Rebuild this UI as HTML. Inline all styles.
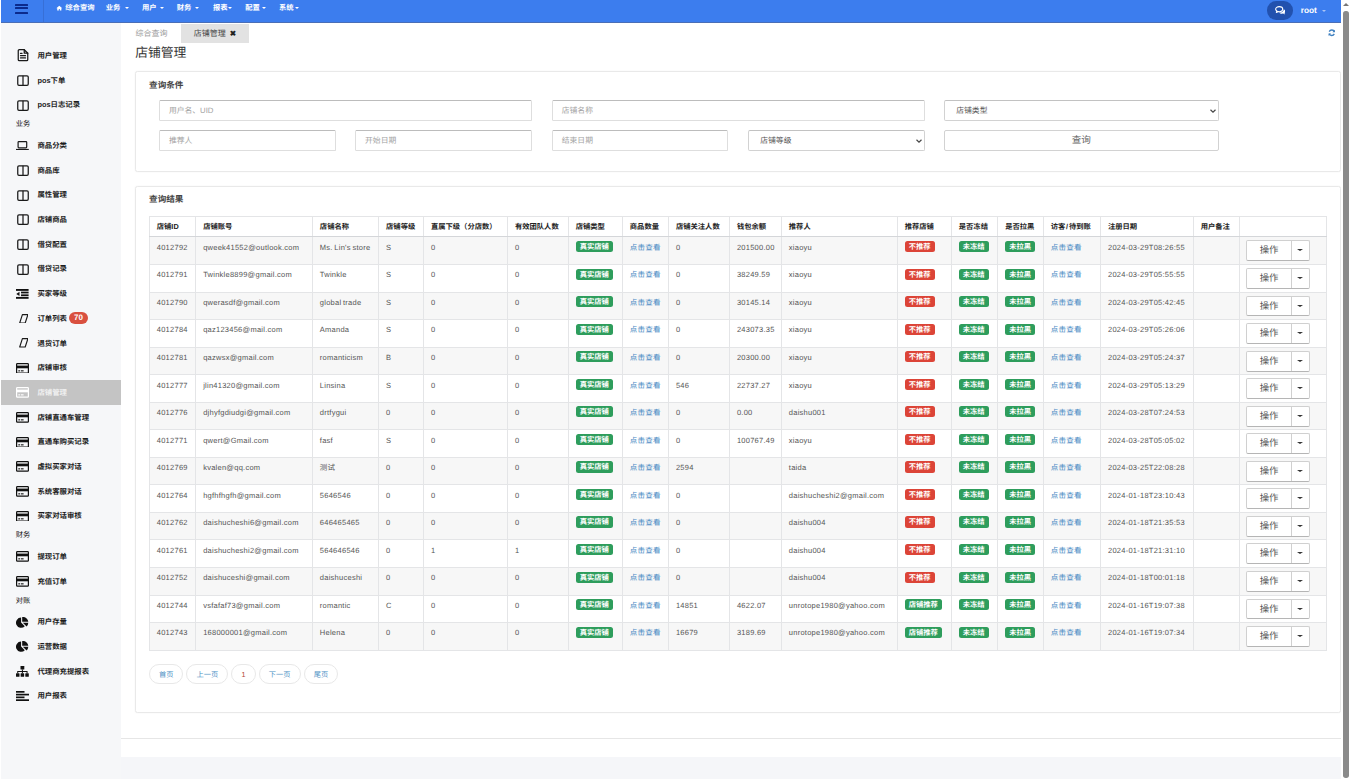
<!DOCTYPE html>
<html lang="zh-CN"><head><meta charset="utf-8"><title>店铺管理</title>
<style>
*{box-sizing:border-box;margin:0;padding:0}
html,body{width:1366px;height:779px;overflow:hidden;background:#fff}
body{text-rendering:geometricPrecision;font-family:"Liberation Sans","Noto Sans CJK SC",sans-serif;font-size:7.4px;color:#495057;position:relative}
#app{position:absolute;left:1px;top:0;width:1340px;height:779px;background:#f5f6f9;overflow:hidden}
.nav{position:absolute;left:0;top:0;width:1340px;height:22.5px;background:#3c7dee;color:#fff}
.burger{position:absolute;left:14.2px;top:3.7px;width:12.8px}
.burger i{display:block;height:1.9px;background:#0b2a8c;margin-bottom:1.8px;border-radius:.5px}
.burger i:nth-child(2){margin-bottom:2.4px}
.vsep{position:absolute;left:41.5px;top:0;width:1px;height:22.5px;background:#376fd6}
.home{position:absolute;left:55px;top:5px;width:6.6px;height:6.2px}
.mi{position:absolute;top:2.3px;line-height:11px;font-weight:bold;font-size:7.3px;white-space:nowrap;margin-left:-1px}
.car{position:absolute;top:7.1px;width:0;height:0;border-left:2.5px solid transparent;border-right:2.5px solid transparent;border-top:2.5px solid #fff;margin-left:-1.2px}
.car.light{border-top-color:#a9c4f5;border-left-width:2.8px;border-right-width:2.8px;border-top-width:2.4px}
.cdk{display:inline-block;width:0;height:0;border-left:3px solid transparent;border-right:3px solid transparent;border-top:2.7px solid #333;vertical-align:middle;margin-top:-1px}
.chat{position:absolute;left:1266.4px;top:1px;width:25.4px;height:18.5px;border-radius:9.2px;background:#2251ae;display:flex;align-items:center;justify-content:center}
.user{position:absolute;left:1299.7px;top:5.1px;line-height:11px;font-weight:bold;font-size:8.3px}
.side{position:absolute;left:0;top:22.5px;width:120px;bottom:0;background:#f6f7f9;padding-top:20.9px}
.si{position:relative;height:24.7px;color:#1c1c1c;font-weight:bold;font-size:7.4px;white-space:nowrap;line-height:24.7px}
.si .ic{position:absolute;display:block}
.si .st{position:absolute;left:36.4px;top:.6px}
.si.act{background:#c4c4c4;color:#f0f0f0}
.si.act .ic{filter:invert(1) brightness(3)}
.sh{height:16px;padding-left:14.8px;line-height:14.6px;font-size:7.3px;color:#111}
.bdg{position:absolute;left:68.3px;top:5.3px;height:12.3px;width:18.5px;text-align:center;line-height:12.3px;background:#d9503f;color:#fff;border-radius:6.2px;font-size:8px;font-weight:bold}
.main{position:absolute;left:120px;top:22.5px;width:1220px;height:716px;background:#fff}
.tabs{position:absolute;left:.5px;top:0;height:21px;width:1219.5px}
.tab{position:absolute;top:1.3px;height:19px;line-height:19px;font-size:8px;color:#9a9a9a}
.tab.t1{left:14px}
.tab.t2{left:59.7px;width:68px;background:#e2e2e2;color:#444;padding-left:12.5px}
.tab .x{font-size:7.6px;color:#222;margin-left:1.8px;font-weight:bold}
.refresh{position:absolute;left:1206.5px;top:6.5px;width:7.5px;height:7.5px}
.title{position:absolute;left:14.2px;top:21.7px;font-size:12.8px;font-weight:normal;color:#333;line-height:18px}
.card{position:absolute;left:13.9px;width:1205.9px;background:#fff;border:1px solid #e9e9e9;border-radius:2.5px;box-shadow:0 0 2px rgba(0,0,0,.06)}
.c1{top:48.3px;height:101px}
.c2{top:163px;height:527.4px}
.ct{position:absolute;left:13.2px;top:6.8px;font-size:8.6px;font-weight:bold;color:#444;line-height:12px}
.fr{position:absolute;left:0;width:100%;height:20px}
.r1{top:28px}.r2{top:58.1px}
.inp{position:absolute;top:0;height:20.8px;border:1px solid #dedede;border-top-color:#bcbcbc;border-radius:1.5px;background:#fff;color:#a2a2a2;font-size:7.8px;line-height:20.4px;padding-left:9px}
.inp.sel{color:#555;border-radius:2px;border-color:#d2d2d2;border-top-color:#c2c2c2;padding-left:11.5px}
.inp.sel .chev{position:absolute;right:1px;top:5.8px}
.inp.btn{text-align:center;padding-left:0;color:#666;font-size:9.6px;border-color:#d2d2d2;border-radius:2px}
.tb{position:absolute;left:12.9px;top:29.2px;border-collapse:collapse;table-layout:fixed;width:1177.5px;font-size:7.5px;letter-spacing:.25px;word-spacing:-.7px}
.tb th,.tb td{border:1px solid #e4e5e7;text-align:left;vertical-align:top;padding:0 0 0 7px;white-space:nowrap;overflow:hidden}
.tb th{height:20.2px;line-height:19px;font-weight:bold;color:#222;font-size:7.3px;letter-spacing:0}
.tb td{height:27.55px;padding-top:5.4px;line-height:10px;color:#555}
.tb tbody tr:nth-child(odd){background:#f7f7f7}
.tb tbody tr:first-child td{height:28.1px;padding-top:5.9px}
.tb tbody tr:first-child td.op{padding-top:3.5px}
.tb thead th{border-bottom-color:#d4d6d9}
.tb a{color:#4a8ac4}
.b{display:inline-block;color:#fff;font-weight:bold;font-size:7.3px;line-height:11.2px;height:11.2px;padding:0 4px;border-radius:2.5px;letter-spacing:0;vertical-align:top;margin-top:-1.8px}
.b.g{background:#2e9d5c}
.b.r{background:#dc4437}
.tb td.op{padding:3px 0 0 6.1px}
.ob{display:inline-flex;height:20.9px;border:1px solid #d0d0d0;border-bottom-color:#b5b5b5;border-radius:2px;background:#fff;color:#555;font-size:9.4px;line-height:18.8px;letter-spacing:0}
.o1{width:45.5px;text-align:center;border-right:1px solid #d0d0d0}
.o2{width:16.3px;text-align:center}
.pg{position:absolute;left:12.9px;top:477.5px;height:20.4px;white-space:nowrap;font-size:7.25px}
.pb{display:inline-block;height:20.4px;line-height:20.2px;border:1px solid #e8e8e8;border-radius:10.2px;padding:0 9.1px;margin-right:3px;color:#4a8fc4;background:#fff}
.pb.n{color:#b5483a}
.foot{position:absolute;left:120px;top:738px;width:1220px;height:18.6px;background:#fff;border-top:1px solid #e6e6e6}
.sbar{position:absolute;left:1341px;top:0;width:9px;height:779px;background:#fff}
.sbar .up{position:absolute;left:2.4px;top:2.8px;width:0;height:0;border-left:3px solid transparent;border-right:3px solid transparent;border-bottom:3px solid #777}
.sbar .thumb{position:absolute;left:2.4px;top:11.4px;width:5.5px;height:766.5px;border-radius:2.7px;background:#8a8a8a}
.sl{font-style:normal;padding:0 .8px}
.nav:after{content:"";position:absolute;left:0;right:0;bottom:0;height:.8px;background:#4a6eb6}

</style></head><body>
<div id="app">
<div class="nav">
 <div class="burger"><i></i><i></i><i></i></div>
 <div class="vsep"></div>
 <svg class="home" viewBox="0 0 24 24" fill="#fff"><path d="M12 2.500 0.500 12.500h3.500v9h6v-6h4v6h6v-9h3.500z"/></svg>
 <span class="mi" style="left:65.3px">综合查询</span>
 <span class="mi" style="left:105.8px">业务</span><b class="car" style="left:125px"></b>
 <span class="mi" style="left:141.9px">用户</span><b class="car" style="left:160.600px"></b>
 <span class="mi" style="left:176.8px">财务</span><b class="car" style="left:195.500px"></b>
 <span class="mi" style="left:212.9px">报表</span><b class="car" style="left:228.500px"></b>
 <span class="mi" style="left:245.3px">配置</span><b class="car" style="left:261.700px"></b>
 <span class="mi" style="left:278.9px">系统</span><b class="car" style="left:295px"></b>
 <div class="chat"><svg viewBox="0 0 24 20" width="10.600" height="8.800"><path d="M9.500 1.500c4.400 0 8 2.600 8 5.800s-3.600 5.800-8 5.800c-.9 0-1.700-.1-2.500-.3L3 14.500l1.300-3C2.600 10.400 1.500 9 1.500 7.300c0-3.200 3.600-5.800 8-5.800z" fill="none" stroke="#fff" stroke-width="2.600" stroke-linejoin="round"/><path d="M19.800 7.500c2.200 1 3.700 2.700 3.700 4.600 0 1.500-.8 2.800-2.100 3.700l1.300 3.400-4.200-1.900c-.8.200-1.600.3-2.500.3-2.900 0-5.400-1.100-6.800-2.800 5.600.4 10.800-2.600 10.600-7.300z" fill="#fff"/></svg></div>
 <div class="user">root</div><b class="car light" style="left:1322.3px;top:10px"></b>
</div>
<div class="side">
<div class="si"><svg class="ic" style="width:12px;height:12.4px;left:15.6px;top:6.1px" viewBox="0 0 24 25" preserveAspectRatio="none"><g fill="none" stroke="#1a1a1a" stroke-width="2.5" stroke-linejoin="round" stroke-linecap="round"><path d="M14.500 1.500H4.500a2 2 0 0 0-2 2v18a2 2 0 0 0 2 2h15a2 2 0 0 0 2-2V8.500z"/><path d="M14.500 1.500v7h7"/><path d="M7 13.500h10M7 18h10M7 9h3"/></g></svg><span class="st">用户管理</span></div>
<div class="si"><svg class="ic" style="width:12px;height:11px;left:15.6px;top:6.8px" viewBox="0 0 24 22" preserveAspectRatio="none"><g fill="none" stroke="#1a1a1a" stroke-width="2.5" stroke-linejoin="round"><rect x="1.500" y="1.500" width="21" height="19" rx="2.500"/><path d="M12 1.500v19"/></g></svg><span class="st">pos下单</span></div>
<div class="si"><svg class="ic" style="width:12px;height:11px;left:15.6px;top:6.8px" viewBox="0 0 24 22" preserveAspectRatio="none"><g fill="none" stroke="#1a1a1a" stroke-width="2.5" stroke-linejoin="round"><rect x="1.500" y="1.500" width="21" height="19" rx="2.500"/><path d="M12 1.500v19"/></g></svg><span class="st">pos日志记录</span></div>
<div class="sh">业务</div>
<div class="si"><svg class="ic" style="width:12.8px;height:9.2px;left:15.2px;top:7.7px" viewBox="0 0 25.600 18.400" preserveAspectRatio="none"><g fill="none" stroke="#1a1a1a" stroke-width="2.400" stroke-linejoin="round"><rect x="4.200" y="1.200" width="17.200" height="12.400" rx="1.500"/><path d="M0 17h25.600"/></g></svg><span class="st">商品分类</span></div>
<div class="si"><svg class="ic" style="width:12px;height:11px;left:15.6px;top:6.8px" viewBox="0 0 24 22" preserveAspectRatio="none"><g fill="none" stroke="#1a1a1a" stroke-width="2.5" stroke-linejoin="round"><rect x="1.500" y="1.500" width="21" height="19" rx="2.500"/><path d="M12 1.500v19"/></g></svg><span class="st">商品库</span></div>
<div class="si"><svg class="ic" style="width:12px;height:11px;left:15.6px;top:6.8px" viewBox="0 0 24 22" preserveAspectRatio="none"><g fill="none" stroke="#1a1a1a" stroke-width="2.5" stroke-linejoin="round"><rect x="1.500" y="1.500" width="21" height="19" rx="2.500"/><path d="M12 1.500v19"/></g></svg><span class="st">属性管理</span></div>
<div class="si"><svg class="ic" style="width:12px;height:11px;left:15.6px;top:6.8px" viewBox="0 0 24 22" preserveAspectRatio="none"><g fill="none" stroke="#1a1a1a" stroke-width="2.5" stroke-linejoin="round"><rect x="1.500" y="1.500" width="21" height="19" rx="2.500"/><path d="M12 1.500v19"/></g></svg><span class="st">店铺商品</span></div>
<div class="si"><svg class="ic" style="width:12px;height:11px;left:15.6px;top:6.8px" viewBox="0 0 24 22" preserveAspectRatio="none"><g fill="none" stroke="#1a1a1a" stroke-width="2.5" stroke-linejoin="round"><rect x="1.500" y="1.500" width="21" height="19" rx="2.500"/><path d="M12 1.500v19"/></g></svg><span class="st">借贷配置</span></div>
<div class="si"><svg class="ic" style="width:12px;height:11px;left:15.6px;top:6.8px" viewBox="0 0 24 22" preserveAspectRatio="none"><g fill="none" stroke="#1a1a1a" stroke-width="2.5" stroke-linejoin="round"><rect x="1.500" y="1.500" width="21" height="19" rx="2.500"/><path d="M12 1.500v19"/></g></svg><span class="st">借贷记录</span></div>
<div class="si"><svg class="ic" style="width:12.6px;height:9.8px;left:15.3px;top:7.4px" viewBox="0 0 25 20" preserveAspectRatio="none"><g fill="#111"><rect x="0" y="0" width="25" height="3.800"/><rect x="10" y="5.400" width="15" height="3.600"/><rect x="10" y="11" width="15" height="3.600"/><rect x="0" y="16.200" width="25" height="3.800"/><path d="M7 5.500v9l-6.500-4.500z"/></g></svg><span class="st">买家等级</span></div>
<div class="si"><svg class="ic" style="width:9.600px;height:9.600px;left:17.900px;top:7.300px" viewBox="0 0 19.200 19.200"><path d="M6.800 1.200h11l-5.400 16.800H1.400z" fill="none" stroke="#1a1a1a" stroke-width="2.300" stroke-linejoin="round"/></svg><span class="st">订单列表</span><span class="bdg">70</span></div>
<div class="si"><svg class="ic" style="width:9.600px;height:9.600px;left:17.900px;top:7.300px" viewBox="0 0 19.200 19.200"><path d="M6.800 1.200h11l-5.400 16.800H1.400z" fill="none" stroke="#1a1a1a" stroke-width="2.300" stroke-linejoin="round"/></svg><span class="st">退货订单</span></div>
<div class="si"><svg class="ic" style="width:13px;height:10.8px;left:15.1px;top:6.9px" viewBox="0 0 26 21.600" preserveAspectRatio="none"><g><rect x="1.200" y="1.200" width="23.600" height="19.200" rx="1.600" fill="none" stroke="#111" stroke-width="2.400"/><rect x="1.300" y="5.200" width="23.400" height="5.400" fill="#111"/><rect x="4.600" y="14.600" width="3.400" height="2.200" fill="#111"/><rect x="9.600" y="14.600" width="5.600" height="2.200" fill="#111"/></g></svg><span class="st">店铺审核</span></div>
<div class="si act"><svg class="ic" style="width:13px;height:10.8px;left:15.1px;top:6.9px" viewBox="0 0 26 21.600" preserveAspectRatio="none"><g><rect x="1.200" y="1.200" width="23.600" height="19.200" rx="1.600" fill="none" stroke="#111" stroke-width="2.400"/><rect x="1.300" y="5.200" width="23.400" height="5.400" fill="#111"/><rect x="4.600" y="14.600" width="3.400" height="2.200" fill="#111"/><rect x="9.600" y="14.600" width="5.600" height="2.200" fill="#111"/></g></svg><span class="st">店铺管理</span></div>
<div class="si"><svg class="ic" style="width:13px;height:10.8px;left:15.1px;top:6.9px" viewBox="0 0 26 21.600" preserveAspectRatio="none"><g><rect x="1.200" y="1.200" width="23.600" height="19.200" rx="1.600" fill="none" stroke="#111" stroke-width="2.400"/><rect x="1.300" y="5.200" width="23.400" height="5.400" fill="#111"/><rect x="4.600" y="14.600" width="3.400" height="2.200" fill="#111"/><rect x="9.600" y="14.600" width="5.600" height="2.200" fill="#111"/></g></svg><span class="st">店铺直通车管理</span></div>
<div class="si"><svg class="ic" style="width:13px;height:10.8px;left:15.1px;top:6.9px" viewBox="0 0 26 21.600" preserveAspectRatio="none"><g><rect x="1.200" y="1.200" width="23.600" height="19.200" rx="1.600" fill="none" stroke="#111" stroke-width="2.400"/><rect x="1.300" y="5.200" width="23.400" height="5.400" fill="#111"/><rect x="4.600" y="14.600" width="3.400" height="2.200" fill="#111"/><rect x="9.600" y="14.600" width="5.600" height="2.200" fill="#111"/></g></svg><span class="st">直通车购买记录</span></div>
<div class="si"><svg class="ic" style="width:13px;height:10.8px;left:15.1px;top:6.9px" viewBox="0 0 26 21.600" preserveAspectRatio="none"><g><rect x="1.200" y="1.200" width="23.600" height="19.200" rx="1.600" fill="none" stroke="#111" stroke-width="2.400"/><rect x="1.300" y="5.200" width="23.400" height="5.400" fill="#111"/><rect x="4.600" y="14.600" width="3.400" height="2.200" fill="#111"/><rect x="9.600" y="14.600" width="5.600" height="2.200" fill="#111"/></g></svg><span class="st">虚拟买家对话</span></div>
<div class="si"><svg class="ic" style="width:13px;height:10.8px;left:15.1px;top:6.9px" viewBox="0 0 26 21.600" preserveAspectRatio="none"><g><rect x="1.200" y="1.200" width="23.600" height="19.200" rx="1.600" fill="none" stroke="#111" stroke-width="2.400"/><rect x="1.300" y="5.200" width="23.400" height="5.400" fill="#111"/><rect x="4.600" y="14.600" width="3.400" height="2.200" fill="#111"/><rect x="9.600" y="14.600" width="5.600" height="2.200" fill="#111"/></g></svg><span class="st">系统客服对话</span></div>
<div class="si"><svg class="ic" style="width:13px;height:10.8px;left:15.1px;top:6.9px" viewBox="0 0 26 21.600" preserveAspectRatio="none"><g><rect x="1.200" y="1.200" width="23.600" height="19.200" rx="1.600" fill="none" stroke="#111" stroke-width="2.400"/><rect x="1.300" y="5.200" width="23.400" height="5.400" fill="#111"/><rect x="4.600" y="14.600" width="3.400" height="2.200" fill="#111"/><rect x="9.600" y="14.600" width="5.600" height="2.200" fill="#111"/></g></svg><span class="st">买家对话审核</span></div>
<div class="sh">财务</div>
<div class="si"><svg class="ic" style="width:13px;height:10.8px;left:15.1px;top:6.9px" viewBox="0 0 26 21.600" preserveAspectRatio="none"><g><rect x="1.200" y="1.200" width="23.600" height="19.200" rx="1.600" fill="none" stroke="#111" stroke-width="2.400"/><rect x="1.300" y="5.200" width="23.400" height="5.400" fill="#111"/><rect x="4.600" y="14.600" width="3.400" height="2.200" fill="#111"/><rect x="9.600" y="14.600" width="5.600" height="2.200" fill="#111"/></g></svg><span class="st">提现订单</span></div>
<div class="si"><svg class="ic" style="width:13px;height:10.8px;left:15.1px;top:6.9px" viewBox="0 0 26 21.600" preserveAspectRatio="none"><g><rect x="1.200" y="1.200" width="23.600" height="19.200" rx="1.600" fill="none" stroke="#111" stroke-width="2.400"/><rect x="1.300" y="5.200" width="23.400" height="5.400" fill="#111"/><rect x="4.600" y="14.600" width="3.400" height="2.200" fill="#111"/><rect x="9.600" y="14.600" width="5.600" height="2.200" fill="#111"/></g></svg><span class="st">充值订单</span></div>
<div class="sh">对账</div>
<div class="si"><svg class="ic" style="width:12.3px;height:10.8px;left:15.45px;top:6.9px" viewBox="0 0 24.600 21.600" preserveAspectRatio="none"><g fill="#111"><path d="M10.200 1.200a10.200 10.200 0 1 0 7.400 17.200L10.200 11.200z"/><path d="M12.400 0v9.600h12.200A11 11 0 0 0 12.400 0z"/><path d="M13.600 11.600h11a11 11 0 0 1-3.400 7.400z"/></g></svg><span class="st">用户存量</span></div>
<div class="si"><svg class="ic" style="width:12.3px;height:10.8px;left:15.45px;top:6.9px" viewBox="0 0 24.600 21.600" preserveAspectRatio="none"><g fill="#111"><path d="M10.200 1.200a10.200 10.200 0 1 0 7.400 17.200L10.200 11.200z"/><path d="M12.400 0v9.600h12.200A11 11 0 0 0 12.400 0z"/><path d="M13.600 11.600h11a11 11 0 0 1-3.400 7.400z"/></g></svg><span class="st">运营数据</span></div>
<div class="si"><svg class="ic" style="width:12.8px;height:10.8px;left:15.2px;top:6.9px" viewBox="0 0 25.600 21.600" preserveAspectRatio="none"><g fill="#111"><rect x="9" y="0" width="7.600" height="7" rx="1"/><rect x="0" y="14.600" width="7" height="7" rx="1"/><rect x="9.300" y="14.600" width="7" height="7" rx="1"/><rect x="18.600" y="14.600" width="7" height="7" rx="1"/><path d="M11.800 7h2v3h9.300v4.600h-2V12h-7.300v2.600h-2V12H4.500v2.600h-2V10h9.300z"/></g></svg><span class="st">代理商充提报表</span></div>
<div class="si"><svg class="ic" style="width:13px;height:10px;left:15.1px;top:7.3px" viewBox="0 0 26 20" preserveAspectRatio="none"><g fill="#111"><rect x="0" y="0" width="17" height="3.400"/><rect x="0" y="5.500" width="26" height="3.400"/><rect x="0" y="11" width="17" height="3.400"/><rect x="0" y="16.600" width="26" height="3.400"/></g></svg><span class="st">用户报表</span></div>
</div>
<div class="main">
<div class="tabs"><span class="tab t1">综合查询</span><span class="tab t2">店铺管理 <span class="x">✖</span></span>
<svg class="refresh" viewBox="0 0 24 24" width="7" height="7" fill="none" stroke="#3f80c0" stroke-width="4.5"><path d="M20.5 9A9 9 0 0 0 4 8.500"/><path d="M3.500 15A9 9 0 0 0 20 15.500"/><path d="M22 2v8h-8z" fill="#3f80c0" stroke="none"/><path d="M2 22v-8h8z" fill="#3f80c0" stroke="none"/></svg>
</div>
<h1 class="title">店铺管理</h1>
<div class="card c1">
 <div class="ct">查询条件</div>
 <div class="fr r1">
  <div class="inp" style="left:23px;width:372.8px"><span>用户名、UID</span></div>
  <div class="inp" style="left:415.9px;width:373.2px"><span>店铺名称</span></div>
  <div class="inp sel" style="left:807.9px;width:275.2px"><span>店铺类型</span><svg class="chev" viewBox="0 0 16 16" width="8" height="8"><path d="M3 5.500l5 5 5-5" fill="none" stroke="#444" stroke-width="2.300"/></svg></div>
 </div>
 <div class="fr r2">
  <div class="inp" style="left:23px;width:177.2px"><span>推荐人</span></div>
  <div class="inp" style="left:219.2px;width:176.6px"><span>开始日期</span></div>
  <div class="inp" style="left:415.9px;width:176.1px"><span>结束日期</span></div>
  <div class="inp sel" style="left:611.9px;width:177.2px"><span>店铺等级</span><svg class="chev" viewBox="0 0 16 16" width="8" height="8"><path d="M3 5.500l5 5 5-5" fill="none" stroke="#444" stroke-width="2.300"/></svg></div>
  <div class="inp btn" style="left:807.9px;width:275.2px"><span>查询</span></div>
 </div>
</div>
<div class="card c2">
 <div class="ct">查询结果</div>
 <table class="tb"><colgroup><col style="width:46.4px"><col style="width:116.7px"><col style="width:66.2px"><col style="width:44.9px"><col style="width:84px"><col style="width:60.7px"><col style="width:54.2px"><col style="width:46.1px"><col style="width:61px"><col style="width:51.9px"><col style="width:115.9px"><col style="width:54.1px"><col style="width:46.4px"><col style="width:45.5px"><col style="width:57.3px"><col style="width:92.7px"><col style="width:46.1px"><col style="width:87.4px"></colgroup>
<thead><tr><th>店铺ID</th><th>店铺账号</th><th>店铺名称</th><th>店铺等级</th><th>直属下级（分店数）</th><th>有效团队人数</th><th>店铺类型</th><th>商品数量</th><th>店铺关注人数</th><th>钱包余额</th><th>推荐人</th><th>推荐店铺</th><th>是否冻结</th><th>是否拉黑</th><th>访客<i class="sl">/</i>待到账</th><th>注册日期</th><th>用户备注</th><th></th></tr></thead>
<tbody>
<tr><td>4012792</td><td>qweek41552@outlook.com</td><td>Ms. Lin's store</td><td>S</td><td>0</td><td>0</td><td><span class="b g">真实店铺</span></td><td><a>点击查看</a></td><td>0</td><td>201500.00</td><td>xiaoyu</td><td><span class="b r">不推荐</span></td><td><span class="b g">未冻结</span></td><td><span class="b g">未拉黑</span></td><td><a>点击查看</a></td><td>2024-03-29T08:26:55</td><td></td><td class="op"><span class="ob"><span class="o1">操作</span><span class="o2"><b class="cdk"></b></span></span></td></tr>
<tr><td>4012791</td><td>Twinkle8899@gmail.com</td><td>Twinkle</td><td>S</td><td>0</td><td>0</td><td><span class="b g">真实店铺</span></td><td><a>点击查看</a></td><td>0</td><td>38249.59</td><td>xiaoyu</td><td><span class="b r">不推荐</span></td><td><span class="b g">未冻结</span></td><td><span class="b g">未拉黑</span></td><td><a>点击查看</a></td><td>2024-03-29T05:55:55</td><td></td><td class="op"><span class="ob"><span class="o1">操作</span><span class="o2"><b class="cdk"></b></span></span></td></tr>
<tr><td>4012790</td><td>qwerasdf@gmail.com</td><td>global trade</td><td>S</td><td>0</td><td>0</td><td><span class="b g">真实店铺</span></td><td><a>点击查看</a></td><td>0</td><td>30145.14</td><td>xiaoyu</td><td><span class="b r">不推荐</span></td><td><span class="b g">未冻结</span></td><td><span class="b g">未拉黑</span></td><td><a>点击查看</a></td><td>2024-03-29T05:42:45</td><td></td><td class="op"><span class="ob"><span class="o1">操作</span><span class="o2"><b class="cdk"></b></span></span></td></tr>
<tr><td>4012784</td><td>qaz123456@mail.com</td><td>Amanda</td><td>S</td><td>0</td><td>0</td><td><span class="b g">真实店铺</span></td><td><a>点击查看</a></td><td>0</td><td>243073.35</td><td>xiaoyu</td><td><span class="b r">不推荐</span></td><td><span class="b g">未冻结</span></td><td><span class="b g">未拉黑</span></td><td><a>点击查看</a></td><td>2024-03-29T05:26:06</td><td></td><td class="op"><span class="ob"><span class="o1">操作</span><span class="o2"><b class="cdk"></b></span></span></td></tr>
<tr><td>4012781</td><td>qazwsx@gmail.com</td><td>romanticism</td><td>B</td><td>0</td><td>0</td><td><span class="b g">真实店铺</span></td><td><a>点击查看</a></td><td>0</td><td>20300.00</td><td>xiaoyu</td><td><span class="b r">不推荐</span></td><td><span class="b g">未冻结</span></td><td><span class="b g">未拉黑</span></td><td><a>点击查看</a></td><td>2024-03-29T05:24:37</td><td></td><td class="op"><span class="ob"><span class="o1">操作</span><span class="o2"><b class="cdk"></b></span></span></td></tr>
<tr><td>4012777</td><td>jlin41320@gmail.com</td><td>Linsina</td><td>S</td><td>0</td><td>0</td><td><span class="b g">真实店铺</span></td><td><a>点击查看</a></td><td>546</td><td>22737.27</td><td>xiaoyu</td><td><span class="b r">不推荐</span></td><td><span class="b g">未冻结</span></td><td><span class="b g">未拉黑</span></td><td><a>点击查看</a></td><td>2024-03-29T05:13:29</td><td></td><td class="op"><span class="ob"><span class="o1">操作</span><span class="o2"><b class="cdk"></b></span></span></td></tr>
<tr><td>4012776</td><td>djhyfgdiudgi@gmail.com</td><td>drtfygui</td><td>0</td><td>0</td><td>0</td><td><span class="b g">真实店铺</span></td><td><a>点击查看</a></td><td>0</td><td>0.00</td><td>daishu001</td><td><span class="b r">不推荐</span></td><td><span class="b g">未冻结</span></td><td><span class="b g">未拉黑</span></td><td><a>点击查看</a></td><td>2024-03-28T07:24:53</td><td></td><td class="op"><span class="ob"><span class="o1">操作</span><span class="o2"><b class="cdk"></b></span></span></td></tr>
<tr><td>4012771</td><td>qwert@Gmail.com</td><td>fasf</td><td>S</td><td>0</td><td>0</td><td><span class="b g">真实店铺</span></td><td><a>点击查看</a></td><td>0</td><td>100767.49</td><td>xiaoyu</td><td><span class="b r">不推荐</span></td><td><span class="b g">未冻结</span></td><td><span class="b g">未拉黑</span></td><td><a>点击查看</a></td><td>2024-03-28T05:05:02</td><td></td><td class="op"><span class="ob"><span class="o1">操作</span><span class="o2"><b class="cdk"></b></span></span></td></tr>
<tr><td>4012769</td><td>kvalen@qq.com</td><td>测试</td><td>0</td><td>0</td><td>0</td><td><span class="b g">真实店铺</span></td><td><a>点击查看</a></td><td>2594</td><td></td><td>taida</td><td><span class="b r">不推荐</span></td><td><span class="b g">未冻结</span></td><td><span class="b g">未拉黑</span></td><td><a>点击查看</a></td><td>2024-03-25T22:08:28</td><td></td><td class="op"><span class="ob"><span class="o1">操作</span><span class="o2"><b class="cdk"></b></span></span></td></tr>
<tr><td>4012764</td><td>hgfhfhgfh@gmail.com</td><td>5646546</td><td>0</td><td>0</td><td>0</td><td><span class="b g">真实店铺</span></td><td><a>点击查看</a></td><td>0</td><td></td><td>daishucheshi2@gmail.com</td><td><span class="b r">不推荐</span></td><td><span class="b g">未冻结</span></td><td><span class="b g">未拉黑</span></td><td><a>点击查看</a></td><td>2024-01-18T23:10:43</td><td></td><td class="op"><span class="ob"><span class="o1">操作</span><span class="o2"><b class="cdk"></b></span></span></td></tr>
<tr><td>4012762</td><td>daishucheshi6@gmail.com</td><td>646465465</td><td>0</td><td>0</td><td>0</td><td><span class="b g">真实店铺</span></td><td><a>点击查看</a></td><td>0</td><td></td><td>daishu004</td><td><span class="b r">不推荐</span></td><td><span class="b g">未冻结</span></td><td><span class="b g">未拉黑</span></td><td><a>点击查看</a></td><td>2024-01-18T21:35:53</td><td></td><td class="op"><span class="ob"><span class="o1">操作</span><span class="o2"><b class="cdk"></b></span></span></td></tr>
<tr><td>4012761</td><td>daishucheshi2@gmail.com</td><td>564646546</td><td>0</td><td>1</td><td>1</td><td><span class="b g">真实店铺</span></td><td><a>点击查看</a></td><td>0</td><td></td><td>daishu004</td><td><span class="b r">不推荐</span></td><td><span class="b g">未冻结</span></td><td><span class="b g">未拉黑</span></td><td><a>点击查看</a></td><td>2024-01-18T21:31:10</td><td></td><td class="op"><span class="ob"><span class="o1">操作</span><span class="o2"><b class="cdk"></b></span></span></td></tr>
<tr><td>4012752</td><td>daishuceshi@gmail.com</td><td>daishuceshi</td><td>0</td><td>0</td><td>0</td><td><span class="b g">真实店铺</span></td><td><a>点击查看</a></td><td>0</td><td></td><td>daishu004</td><td><span class="b r">不推荐</span></td><td><span class="b g">未冻结</span></td><td><span class="b g">未拉黑</span></td><td><a>点击查看</a></td><td>2024-01-18T00:01:18</td><td></td><td class="op"><span class="ob"><span class="o1">操作</span><span class="o2"><b class="cdk"></b></span></span></td></tr>
<tr><td>4012744</td><td>vsfafaf73@gmail.com</td><td>romantic</td><td>C</td><td>0</td><td>0</td><td><span class="b g">真实店铺</span></td><td><a>点击查看</a></td><td>14851</td><td>4622.07</td><td>unrotope1980@yahoo.com</td><td><span class="b g">店铺推荐</span></td><td><span class="b g">未冻结</span></td><td><span class="b g">未拉黑</span></td><td><a>点击查看</a></td><td>2024-01-16T19:07:38</td><td></td><td class="op"><span class="ob"><span class="o1">操作</span><span class="o2"><b class="cdk"></b></span></span></td></tr>
<tr><td>4012743</td><td>168000001@gmail.com</td><td>Helena</td><td>0</td><td>0</td><td>0</td><td><span class="b g">真实店铺</span></td><td><a>点击查看</a></td><td>16679</td><td>3189.69</td><td>unrotope1980@yahoo.com</td><td><span class="b g">店铺推荐</span></td><td><span class="b g">未冻结</span></td><td><span class="b g">未拉黑</span></td><td><a>点击查看</a></td><td>2024-01-16T19:07:34</td><td></td><td class="op"><span class="ob"><span class="o1">操作</span><span class="o2"><b class="cdk"></b></span></span></td></tr>
</tbody></table>
<div class="pg"><span class="pb">首页</span><span class="pb">上一页</span><span class="pb n">1</span><span class="pb">下一页</span><span class="pb">尾页</span></div>
</div>
</div>
<div class="foot"></div>
</div>
<div class="sbar"><div class="up"></div><div class="thumb"></div></div>
</body></html>
